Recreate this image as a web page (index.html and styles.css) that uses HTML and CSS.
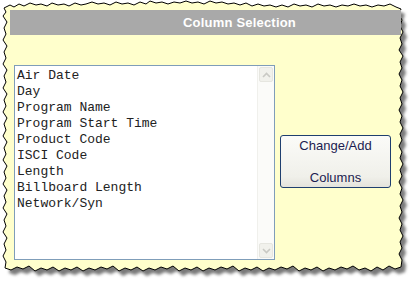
FILE: index.html
```html
<!DOCTYPE html>
<html lang="en">
<head>
  <meta charset="UTF-8" />
  <title>Column Selection</title>
  <link rel="stylesheet" href="styles.css">
</head>
<body>

  <div class="page">
    <!-- torn paper edge -->
    <svg class="paper" width="412" height="281" viewBox="0 0 412 281">
      <defs>
        <filter id="blur" x="-5%" y="-5%" width="110%" height="110%">
          <feGaussianBlur stdDeviation="1.6" />
        </filter>
        <path id="edge" d="M4,8 L10,5 L14,7 L19,4 L24,6 L30,3 L36,5 L41,4 L47,6 L52,3 L58,5 L64,4 L69,6 L75,3 L81,5 L86,4 L92,2 L98,4 L104,3 L110,5 L116,2 L122,4 L128,3 L134,5 L140,2 L146,4 L150,1 L156,3 L162,2 L168,4 L174,2 L180,3 L186,1 L192,3 L198,2 L204,4 L210,1 L216,3 L222,2 L228,4 L234,3 L240,5 L246,3 L252,6 L258,4 L264,6 L270,5 L276,7 L282,5 L288,7 L294,4 L300,6 L306,5 L312,7 L318,4 L324,6 L330,5 L336,7 L342,5 L348,6 L354,4 L360,6 L366,5 L372,7 L378,5 L384,6 L390,4 L396,7 L401,9 L399,15 L402,20 L400,26 L403,32 L400,38 L402,44 L399,50 L403,56 L400,62 L402,68 L399,74 L402,80 L400,86 L403,92 L400,98 L402,104 L399,110 L402,116 L400,122 L403,128 L400,134 L402,140 L399,146 L402,152 L400,158 L403,164 L400,170 L402,176 L399,182 L402,188 L400,194 L403,200 L400,206 L402,212 L399,218 L402,224 L400,230 L403,236 L400,242 L402,248 L399,254 L402,260 L401,267 L395,269 L389,266 L383,270 L377,267 L371,271 L365,268 L359,270 L353,266 L347,269 L341,267 L335,270 L329,268 L323,271 L317,267 L311,270 L305,268 L299,271 L293,266 L287,269 L281,267 L275,270 L269,268 L263,271 L257,267 L251,270 L245,268 L239,271 L233,266 L227,269 L221,267 L215,270 L209,268 L203,271 L197,267 L191,270 L185,268 L179,271 L173,266 L167,269 L161,267 L155,270 L149,268 L143,271 L137,267 L131,270 L125,268 L119,271 L113,266 L107,269 L101,267 L95,270 L89,268 L83,271 L77,267 L71,270 L65,268 L59,271 L53,267 L47,270 L41,268 L35,271 L29,266 L23,269 L17,267 L11,270 L5,268 L6,262 L3,256 L6,250 L4,244 L7,238 L3,232 L6,226 L4,220 L7,214 L3,208 L6,202 L4,196 L7,190 L3,184 L6,178 L4,172 L7,166 L3,160 L6,154 L4,148 L7,142 L3,136 L6,130 L4,124 L7,118 L3,112 L6,106 L4,100 L7,94 L3,88 L6,82 L4,76 L7,70 L3,64 L6,58 L4,52 L7,46 L3,40 L6,34 L4,28 L7,22 L3,16 L6,12 Z" />
      </defs>
      <use href="#edge" transform="translate(4,5)" fill="#7a7a7a" filter="url(#blur)" />
      <use href="#edge" fill="#ffffcc" stroke="#000" stroke-width="1" />
    </svg>

    <div class="content">
      <div class="title-bar">Column Selection</div>

      <div class="row">
        <div class="listbox">
          <ul class="options">
            <li>Air Date</li>
            <li>Day</li>
            <li>Program Name</li>
            <li>Program Start Time</li>
            <li>Product Code</li>
            <li>ISCI Code</li>
            <li>Length</li>
            <li>Billboard Length</li>
            <li>Network/Syn</li>
          </ul>
          <div class="scrollbar">
            <span class="arrow">
              <svg width="9" height="6" viewBox="0 0 9 6"><path d="M1,5 L4.5,1.5 L8,5" fill="none" stroke="#c9c9c4" stroke-width="1.6" /></svg>
            </span>
            <span class="arrow">
              <svg width="9" height="6" viewBox="0 0 9 6"><path d="M1,1 L4.5,4.5 L8,1" fill="none" stroke="#c9c9c4" stroke-width="1.6" /></svg>
            </span>
          </div>
        </div>

        <button class="change-btn">
          <span>Change/Add</span>
          <span>Columns</span>
        </button>
      </div>
    </div>
  </div>

</body>
</html>
```

FILE: styles.css
```css
* {
  box-sizing: border-box;
}

body {
  margin: 0;
  background-color: #ffffff;
}

.page {
  position: relative;
  width: 412px;
  height: 281px;
  overflow: hidden;
}

.paper {
  position: absolute;
  left: 0;
  top: 0;
}

.content {
  position: relative;
  padding: 10px 11px 0 10px;
}

.title-bar {
  height: 25px;
  line-height: 25px;
  padding-left: 173px;
  background-color: #a9a9a9;
  color: #ffffff;
  font-family: 'Liberation Sans', Arial, sans-serif;
  font-weight: bold;
  font-size: 13px;
  letter-spacing: 0.2px;
}

.row {
  display: flex;
  align-items: flex-start;
  margin-top: 30px;
  padding-left: 4px;
}

.listbox {
  display: flex;
  width: 261px;
  height: 195px;
  border: 1px solid #7f9db9;
  background-color: #ffffff;
}

.options {
  flex: 1;
  list-style: none;
  margin: 0;
  padding: 2px 0 0 2px;
  font-family: 'Liberation Mono', 'Courier New', monospace;
  font-size: 13px;
  line-height: 16px;
  color: #222222;
}

.scrollbar {
  width: 17px;
  display: flex;
  flex-direction: column;
  justify-content: space-between;
  padding: 1px;
  background-color: #fbfbf9;
  border-left: 1px solid #f0f0ec;
}

.arrow {
  display: flex;
  align-items: center;
  justify-content: center;
  height: 15px;
  background-color: #f1f1ec;
  border: 1px solid #e6e6e0;
  border-radius: 2px;
}

.change-btn {
  display: flex;
  flex-direction: column;
  align-items: center;
  justify-content: space-between;
  width: 111px;
  height: 53px;
  margin: 70px 0 0 5px;
  padding: 2px 0 1px;
  border: 1px solid #1f3f6f;
  border-radius: 3px;
  background: linear-gradient(#fbfbf8, #f0f0ea 80%, #e4e3dc);
  color: #1c1c50;
  font-family: 'Liberation Sans', Arial, sans-serif;
  font-size: 13px;
  line-height: 16px;
}
```
